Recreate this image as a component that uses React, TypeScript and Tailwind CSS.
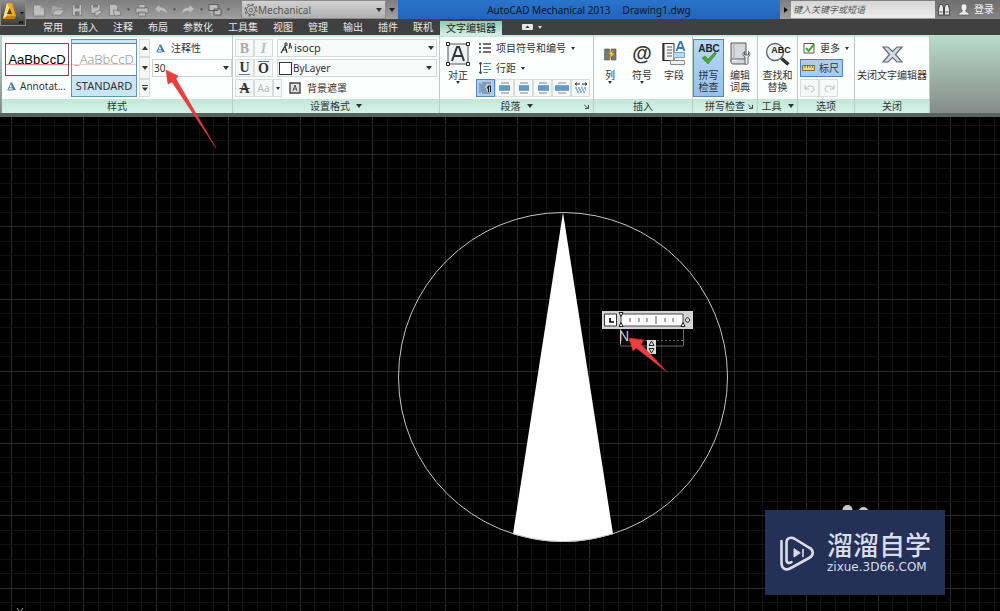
import type { ReactNode } from "react";
import clsx from "clsx";

const MENU = [
  "常用",
  "插入",
  "注释",
  "布局",
  "参数化",
  "工具集",
  "视图",
  "管理",
  "输出",
  "插件",
  "联机",
];

const GRID_STEP = 14.45;

function Caret({ className }: { className?: string }) {
  return (
    <svg viewBox="0 0 6 4" className={clsx("h-1 w-1.5 shrink-0", className)}>
      <path d="M0 0h6L3 4z" fill="currentColor" />
    </svg>
  );
}

function SmallCaret() {
  return (
    <svg viewBox="0 0 4 3" className="h-[3px] w-1 shrink-0">
      <path d="M0 0h4L2 3z" fill="#333" />
    </svg>
  );
}

/* ---------- title bar ---------- */

function QuickButton({
  label,
  children,
}: {
  label: string;
  children: ReactNode;
}) {
  return (
    <button type="button" aria-label={label} className="shrink-0">
      <svg viewBox="0 0 14 14" className="size-3.5" fill="#bdbdbd">
        {children}
      </svg>
    </button>
  );
}

function Dot() {
  return (
    <svg viewBox="0 0 3 3" className="size-[3px] shrink-0">
      <path d="M0 .5h3L1.500 3z" fill="#4c4c4c" />
    </svg>
  );
}

function QuickAccess() {
  return (
    <div className="flex w-[241px] shrink-0 items-center gap-[5px] pl-8">
      <QuickButton label="新建">
        <path d="M1.500 2h7l4 3.500V13h-11z" stroke="#6c6c6c" strokeWidth=".6" />
        <path d="M8.500 2v3.500h4" fill="#959595" />
      </QuickButton>
      <QuickButton label="打开">
        <path d="M1 3h4l1 1.500h5V7H4L1 12z" fill="#a5a5a5" />
        <path d="M4 7h9.500L10 12H1z" stroke="#666" strokeWidth=".5" />
      </QuickButton>
      <QuickButton label="保存">
        <path d="M2.500 1.500h9v11h-9z" stroke="#6c6c6c" strokeWidth=".6" />
        <path d="M4.500 2h5v3.500h-5zM5 8.500h4.500V12H5z" fill="#777" />
      </QuickButton>
      <QuickButton label="另存为">
        <path d="M2 1.500h9v9H2z" stroke="#6c6c6c" strokeWidth=".6" />
        <path d="M4 2h5v2.500H4z" fill="#777" />
        <path d="M6 9l5-2 2 2-5 4H6z" stroke="#666" strokeWidth=".6" />
      </QuickButton>
      <QuickButton label="图纸">
        <path d="M1.500 1.500h6l2 2v9h-8z" stroke="#6c6c6c" strokeWidth=".6" />
        <path d="M5 7l7 1 1 4-6 1z" stroke="#666" strokeWidth=".6" />
      </QuickButton>
      <Dot />
      <QuickButton label="打印">
        <path d="M4 1.500h6V5H4zM1 5h12v5H1zM3.500 9h7v4h-7z" stroke="#666" strokeWidth=".6" />
      </QuickButton>
      <QuickButton label="放弃">
        <path d="M5.500 2v2.500C10 4.500 13 6.500 12.500 11 11 8 9 7.500 5.500 7.500V10L1 6z" />
      </QuickButton>
      <Dot />
      <QuickButton label="重做">
        <path d="M8.500 2v2.500C4 4.500 1 6.500 1.500 11 3 8 5 7.500 8.500 7.500V10L13 6z" />
      </QuickButton>
      <Dot />
      <QuickButton label="切换窗口">
        <path d="M1 1.500h9v6H1zM6 6h7v6H6z" stroke="#5c5c5c" />
        <path d="M2 9h2v3h1" fill="none" stroke="#bdbdbd" />
      </QuickButton>
      <Dot />
    </div>
  );
}

function GearIcon() {
  return (
    <svg
      viewBox="0 0 14 14"
      className="pointer-events-none absolute left-0.5 top-0.5 size-3.5"
      fill="none"
      stroke="#666"
    >
      <circle cx="7" cy="7" r="4.500" />
      <circle cx="7" cy="7" r="6" strokeWidth="1.200" strokeDasharray="2.400 2.300" />
      <circle cx="7" cy="7" r="1.800" />
    </svg>
  );
}

function TitleBar() {
  return (
    <header className="flex h-[19px] items-stretch bg-linear-to-b from-[#7e7e7e] to-[#a0a0a0]">
      <QuickAccess />
      <label className="relative flex w-[145px] shrink-0 items-center border border-[#8a8a8a] bg-linear-to-b from-[#d2d2d2] to-[#b0b0b0] text-[#555]">
        <GearIcon />
        <select
          aria-label="工作空间"
          className="w-full appearance-none pl-4 text-[10px] leading-4 outline-none"
        >
          <option>Mechanical</option>
        </select>
        <Caret className="pointer-events-none absolute right-[3px] text-[#333]" />
      </label>
      <button type="button" aria-label="自定义" className="flex w-3 shrink-0 items-center justify-center">
        <Caret className="text-[#222]" />
      </button>
      <h1 className="flex flex-1 items-center justify-center gap-3 bg-linear-to-b from-[#2a74cc] to-[#2365ba] text-[10px] leading-4 text-[#0c1526]">
        <span>AutoCAD Mechanical 2013</span>
        <span>Drawing1.dwg</span>
      </h1>
      <button type="button" aria-label="展开搜索" className="flex w-[11px] shrink-0 items-center justify-center">
        <svg viewBox="0 0 4 6" className="h-1.5 w-1">
          <path d="M0 0l4 3-4 3z" fill="#111" />
        </svg>
      </button>
      <input
        type="search"
        aria-label="搜索"
        placeholder="键入关键字或短语"
        className="my-px w-[144px] shrink-0 bg-linear-to-b from-[#d6d6d6] to-[#ececec] px-0.5 text-[9px] italic outline-none placeholder:text-[#555]"
      />
      <div className="flex w-[65px] shrink-0 items-center gap-2 bg-linear-to-b from-[#6e6e6e] to-[#858585] pl-[3px] text-[10px] text-[#f2f2f2]">
        <button type="button" aria-label="查找">
          <svg viewBox="0 0 12 13" className="h-[13px] w-3" fill="#e6e6e6" stroke="#333" strokeWidth=".8">
            <path d="M2 1.500h2.500L5.500 5v7h-5V6zM10 1.500H7.500L6.500 5v7h5V6z" />
            <path d="M5.500 5h1v2.500h-1zM1.500 9h3M7.500 9h3" />
          </svg>
        </button>
        <button type="button" className="flex items-center gap-1">
          <svg viewBox="0 0 12 13" className="h-[13px] w-3" fill="#eee" stroke="#444" strokeWidth=".6">
            <path d="M6 .8c2 0 3 1.500 3 3.400S7.800 7.500 7.500 8c.2 1 4 1.500 4 4H.5c0-2.500 3.800-3 4-4C4.200 7.500 3 6 3 4.200S4 .8 6 .8z" />
          </svg>
          登录
        </button>
      </div>
    </header>
  );
}

function AppButton() {
  return (
    <button
      type="button"
      aria-label="应用程序菜单"
      className="absolute left-0 top-0 z-10 h-[26px] w-[26px] border border-[#8a8a8a] bg-linear-to-b from-[#8a8a8a] to-[#3c3c3c]"
    >
      <svg viewBox="0 0 24 24" className="size-6">
        <path d="M6 2h5l4 13-2 3H2z" fill="#eda81c" />
        <path d="M6 2L2 18l4-3 3-7z" fill="#fbe08a" />
        <path d="M8.500 7l2.500 6H6z" fill="#5a3c08" />
        <path d="M2 18h11l2-3H6z" fill="#c97a10" />
        <path d="M19 11h4l-2 2.500z" fill="#111" />
        <path d="M18.500 23v-3l1.500 2 1.500-2v3" fill="none" stroke="#111" strokeWidth="1" />
      </svg>
    </button>
  );
}

function MenuBar() {
  return (
    <nav className="flex h-4 items-stretch bg-[#404040] text-[10px] leading-4 text-[#e8e8e8]">
      <ul className="flex w-[440px] shrink-0 gap-[15px] pl-[43px]">
        {MENU.map((item) => (
          <li key={item} className="shrink-0">
            <a href="#">{item}</a>
          </li>
        ))}
      </ul>
      <a
        href="#"
        aria-current="page"
        className="mt-0.5 w-[62px] shrink-0 bg-linear-to-b from-[#8fc8b0] to-[#d4f0e4] text-center leading-[14px] text-[#222]"
      >
        文字编辑器
      </a>
      <button type="button" aria-label="最小化功能区" className="ml-5 flex items-center gap-[5px]">
        <svg viewBox="0 0 11 6" className="h-1.5 w-[11px]">
          <rect width="11" height="6" rx="1" fill="#e6e6e6" />
          <path d="M3.500 4l2-2.500 2 2.500z" fill="#333" />
        </svg>
        <svg viewBox="0 0 4 3" className="h-[3px] w-1">
          <path d="M0 0h4L2 3z" fill="#ddd" />
        </svg>
      </button>
    </nav>
  );
}

/* ---------- ribbon ---------- */

function Panel({
  title,
  width,
  menu,
  launcher,
  children,
}: {
  title: string;
  width: string;
  menu?: boolean;
  launcher?: boolean;
  children: ReactNode;
}) {
  return (
    <section className={clsx("flex shrink-0 flex-col border-r border-[#b9cdc4]", width)}>
      <div className="flex h-16 border-t-2 border-[#cdeade] bg-[#fdfefe] pb-0.5 pt-0.5">{children}</div>
      <footer className="relative flex h-3.5 items-center justify-center gap-1.5 bg-linear-to-b from-[#c4e6d9] to-[#d3f5e9] text-[10px] leading-[14px]">
        <h2>{title}</h2>
        {menu && <Caret />}
        {launcher && (
          <svg viewBox="0 0 5 5" className="absolute right-1 size-[5px]" stroke="#444" fill="none">
            <path d="M0 .5l4 4M4.500 1v3.500H1" />
          </svg>
        )}
      </footer>
    </section>
  );
}

function Tool({
  label,
  children,
  className,
  active,
}: {
  label: string;
  children: ReactNode;
  className?: string;
  active?: boolean;
}) {
  return (
    <button
      type="button"
      aria-label={label}
      className={clsx(
        "flex h-[18px] shrink-0 items-center justify-center border",
        active ? "border-[#5787bb] bg-[#a9cbee]" : "border-[#d9dcdd] bg-[#f7f8f8]",
        className,
      )}
    >
      {children}
    </button>
  );
}

function BigButton({
  lines,
  menu,
  active,
  width,
  children,
}: {
  lines: string[];
  menu?: boolean;
  active?: boolean;
  width: string;
  children: ReactNode;
}) {
  return (
    <button
      type="button"
      className={clsx(
        "flex h-[58px] shrink-0 flex-col items-center border text-[10px] leading-3",
        width,
        active ? "border-[#5787bb] bg-linear-to-b from-[#b9d8f5] to-[#94c1ec]" : "border-transparent",
      )}
    >
      <svg viewBox="0 0 28 28" className="mb-px h-7 w-7 shrink-0">
        {children}
      </svg>
      {lines.map((line) => (
        <span key={line} className="whitespace-nowrap">
          {line}
        </span>
      ))}
      {menu && <SmallCaret />}
    </button>
  );
}

function AnnoIcon() {
  return (
    <svg viewBox="0 0 9 9" className="size-[9px] shrink-0">
      <path d="M3.500.500h1.500L8.800 8H6.500z" fill="#3f6f98" />
      <path d="M.8 8L4 1l2.500 7z" fill="#fff" stroke="#4f80a8" />
      <path d="M2 5.800h4" stroke="#4f80a8" />
    </svg>
  );
}

function StylePanel() {
  return (
    <Panel title="样式" width="w-[231px]">
      <button type="button" className="ml-[3px] mt-1 flex h-[54px] w-16 shrink-0 flex-col">
        <span className="relative flex h-[33px] w-full items-center justify-center border border-[#7a4a50] font-[Liberation_Sans] text-[13px] text-black">
          AaBbCcD
          <span className="absolute inset-x-0 bottom-2.5 border-b border-[#e88]" />
        </span>
        <span className="flex h-5 items-center gap-1 pl-0.5 text-[10px]">
          <AnnoIcon />
          Annotat...
        </span>
      </button>
      <button
        type="button"
        className="ml-0.5 flex h-[58px] w-[66px] shrink-0 flex-col border border-[#5f95b5] bg-[#c9e6f7] pt-[3px]"
      >
        <span className="relative flex h-[33px] w-full items-center justify-center border-y border-[#6b7f8c] bg-white font-[Open_Sans] text-[13px] font-light text-[#888]">
          _AaBbCcD
          <span className="absolute inset-x-0 bottom-2.5 border-b border-[#f6caca]" />
        </span>
        <span className="w-full text-center text-[11px] leading-5">STANDARD</span>
      </button>
      <div className="ml-0.5 flex w-[11px] shrink-0 flex-col">
        <Tool label="上一行" className="w-[11px]">
          <Caret className="rotate-180" />
        </Tool>
        <Tool label="下一行" className="w-[11px] flex-1">
          <Caret />
        </Tool>
        <Tool label="更多样式" className="w-[11px]">
          <svg viewBox="0 0 6 6" className="size-1.5">
            <path d="M0 0h6v1H0zM0 2.500h6L3 6z" fill="#333" />
          </svg>
        </Tool>
      </div>
      <div className="ml-0.5 flex flex-1 flex-col gap-0.5">
        <button type="button" className="flex h-[18px] items-center gap-1.5 pl-1 text-[10px]">
          <AnnoIcon />
          注释性
        </button>
        <label className="relative flex h-[18px] items-center border border-[#cfd4d6] bg-white">
          <input
            aria-label="文字高度"
            defaultValue="30"
            className="w-full pl-px text-[10px] outline-none"
          />
          <Caret className="pointer-events-none absolute right-0.5" />
        </label>
      </div>
    </Panel>
  );
}

function FormatPanel() {
  return (
    <Panel title="设置格式" width="w-[207px]" menu>
      <div className="flex w-full flex-col gap-0.5 pl-0.5 pr-0.5">
        <div className="flex">
          <Tool label="粗体" className="w-[19px] font-[Liberation_Serif] text-[14px] font-bold text-[#aaa]">
            B
          </Tool>
          <Tool label="斜体" className="w-[19px] font-[Liberation_Serif] text-[14px] font-bold italic text-[#bbb]">
            I
          </Tool>
          <label className="relative ml-1 flex h-[18px] flex-1 items-center border border-[#d3d7d9] bg-[#f8f9f9]">
            <svg viewBox="0 0 12 12" className="pointer-events-none absolute left-0.5 size-3" stroke="#333" fill="none">
              <path d="M1 11l4-7 2 7M2 8h5" strokeWidth="1.200" />
              <path d="M5 4V1h2v3M5 3h2M9 7l1-6 2 6M9 5h2" strokeWidth=".9" />
            </svg>
            <select aria-label="字体" className="w-full appearance-none pl-4 text-[11px] leading-4 outline-none">
              <option>isocp</option>
            </select>
            <Caret className="pointer-events-none absolute right-0.5" />
          </label>
        </div>
        <div className="flex">
          <Tool label="下划线" className="w-[19px] font-[Liberation_Serif] text-[14px] font-bold">
            <span className="border-b border-[#4f80a8] leading-[13px]">U</span>
          </Tool>
          <Tool label="上划线" className="w-[19px] font-[Liberation_Serif] text-[14px] font-bold">
            <span className="border-t border-[#4f80a8] leading-[13px]">O</span>
          </Tool>
          <label className="relative ml-1 flex h-[18px] flex-1 items-center border border-[#d3d7d9] bg-[#f8f9f9]">
            <span className="pointer-events-none absolute left-px size-[13px] border border-[#333] bg-white" />
            <select aria-label="颜色" className="w-full appearance-none pl-[15px] text-[10px] leading-4 outline-none">
              <option>ByLayer</option>
            </select>
            <Caret className="pointer-events-none absolute right-1" />
          </label>
        </div>
        <div className="flex text-[10px]">
          <Tool label="删除线" className="w-[19px] font-[Liberation_Serif] text-[14px] font-bold">
            <span className="line-through">A</span>
          </Tool>
          <Tool label="更改大小写" className="w-[19px] text-[10px] text-[#bbb]">
            Aa
          </Tool>
          <Tool label="大小写选项" className="w-[9px]">
            <SmallCaret />
          </Tool>
          <button type="button" className="ml-[7px] flex items-center gap-1.5">
            <svg viewBox="0 0 12 12" className="size-3" fill="#e4e4e4" stroke="#444">
              <path d="M1 1h10v10H1z" strokeWidth="1.400" />
              <path d="M4 9l2-6 2 6M4.500 7h3" fill="none" strokeWidth=".9" />
            </svg>
            背景遮罩
          </button>
        </div>
      </div>
    </Panel>
  );
}

function AlignIcon({ x, w }: { x: number; w: number }) {
  return (
    <svg viewBox="0 0 14 12" className="h-3 w-3.5">
      <path d="M3 1h8M3 11h8" stroke="#888" />
      <path d={`M${x} 3.500h${w}v5h-${w}z`} fill="#8dbbe0" />
      <path d={`M${x} 4h${w}M${x} 6h${w}M${x} 8h${w}`} stroke="#3a78b0" />
    </svg>
  );
}

function ParagraphPanel() {
  return (
    <Panel title="段落" width="w-[154px]" menu launcher>
      <BigButton lines={["对正"]} width="w-9" menu>
        <path d="M4 4h20v20H4z" fill="#eef0f2" stroke="#555" />
        <path d="M8 21L13 7h2l5 14M10 16h8" fill="none" stroke="#333" strokeWidth="2" />
        <path d="M2.500 2.500h3v3h-3zM22.500 2.500h3v3h-3zM2.500 22.500h3v3h-3zM22.500 22.500h3v3h-3z" fill="#fff" stroke="#222" />
      </BigButton>
      <div className="flex flex-col gap-0.5 text-[10px]">
        <button type="button" className="flex h-[18px] items-center gap-[5px] pl-[3px]">
          <svg viewBox="0 0 12 11" className="h-[11px] w-3">
            <path d="M0 0h2v2H0zM0 4h2v2H0zM0 8h2v2H0z" fill="#2d6da8" />
            <path d="M4 1h8M4 5h8M4 9h8" stroke="#444" strokeWidth="1.300" />
          </svg>
          项目符号和编号
          <SmallCaret />
        </button>
        <button type="button" className="flex h-[18px] items-center gap-[5px] pl-[3px]">
          <svg viewBox="0 0 12 12" className="size-3">
            <path d="M1.500 1v10M0 2.500L1.500 0 3 2.500M0 9.500L1.500 12 3 9.500" stroke="#333" fill="none" strokeWidth=".9" />
            <path d="M4.500 1.500H12M4.500 4.500H10M4.500 7.500H12M4.500 10.500H9" stroke="#4583b8" />
          </svg>
          行距
          <SmallCaret />
        </button>
        <div className="flex">
          <Tool label="默认" className="w-[19px]" active>
            <svg viewBox="0 0 14 12" className="h-3 w-3.5" fill="none">
              <path d="M3 1h9M2 3h5M2 5h4M2 7h5M2 9h6M3 11h8" stroke="#667" />
              <path d="M1 1v10" stroke="#4583b8" />
              <path d="M9.500 4v6M11.500 4v6M12 4H9" stroke="#222" />
              <path d="M9.500 4a1.500 1.500 0 000 3z" fill="#222" />
            </svg>
          </Tool>
          <Tool label="左对齐" className="w-[19px]">
            <AlignIcon x={1} w={11} />
          </Tool>
          <Tool label="居中" className="w-[19px]">
            <AlignIcon x={2} w={10} />
          </Tool>
          <Tool label="右对齐" className="w-[19px]">
            <AlignIcon x={2} w={11} />
          </Tool>
          <Tool label="两端对齐" className="w-[19px]">
            <AlignIcon x={0} w={14} />
          </Tool>
          <Tool label="分散对齐" className="w-[19px]">
            <svg viewBox="0 0 14 12" className="h-3 w-3.5" fill="none">
              <path d="M1 2h12" stroke="#333" strokeDasharray="5 2" />
              <path d="M3 .5L1 2l2 1.500M11 .5L13 2l-2 1.500" stroke="#333" />
              <path d="M1 6h12M2 8h10M3 10h8" stroke="#3a78b0" strokeDasharray="2 1" />
            </svg>
          </Tool>
        </div>
      </div>
    </Panel>
  );
}

function InsertPanel() {
  return (
    <Panel title="插入" width="w-[99px]">
      <BigButton lines={["列"]} width="w-8" menu>
        <path d="M8.500 9h5v11h-5zM15 9h5v11h-5z" fill="#777" stroke="#555" strokeWidth=".6" />
        <path d="M19 9l-7 5 3 .500-3 5 7-6-3-.500z" fill="#ffd83a" stroke="#8a6a00" strokeWidth=".5" />
      </BigButton>
      <BigButton lines={["符号"]} width="w-8" menu>
        <text x="14" y="20" textAnchor="middle" fontFamily="Liberation Sans, sans-serif" fontSize="20" fontWeight="700" fill="#333">
          @
        </text>
      </BigButton>
      <BigButton lines={["字段"]} width="w-8">
        <path d="M3 3.500h11v17H3z" fill="#f4f4f4" stroke="#333" />
        <path d="M3.500 3v18" stroke="#333" strokeWidth="2" />
        <path d="M7 7h5M7 10h5M7 13h5M7 16h5" stroke="#555" />
        <path d="M13.500 12.500h11v5h-11z" fill="#b9d8f0" stroke="#7aa7cc" />
        <path d="M10.500 20.500h14v4h-14z" fill="#eee" stroke="#888" />
        <path d="M16.500 11l3.500-9h1l3.500 9M18 8h5" fill="none" stroke="#2f74b5" strokeWidth="1.800" />
      </BigButton>
    </Panel>
  );
}

function SpellPanel() {
  return (
    <Panel title="拼写检查" width="w-[65px]" launcher>
      <BigButton lines={["拼写", "检查"]} width="w-[31px]" active>
        <text x="14" y="12" textAnchor="middle" fontFamily="Liberation Sans, sans-serif" fontSize="10" fontWeight="700" fill="#223">
          ABC
        </text>
        <path d="M7 18l3-2 3 3 7-7 1.500 1.500L13 24z" fill="#4aa832" stroke="#2f7a1e" strokeWidth=".5" />
      </BigButton>
      <BigButton lines={["编辑", "词典"]} width="w-8">
        <path d="M5 3h15v21H7c-1.500 0-2-1-2-2z" fill="#d5d8dc" stroke="#555" />
        <path d="M5 21c0-1.500 1-2 2-2h13" fill="#fff" stroke="#555" />
        <path d="M8 3v16" stroke="#aaa" />
        <path d="M18.500 11.500c-2 1-2 4.500.500 5.500v6c0 2 3 2 3 0v-6c2.500-1 2.500-4.500.500-5.500v3.500h-4z" fill="#e9ecef" stroke="#444" strokeWidth=".8" />
      </BigButton>
    </Panel>
  );
}

function ToolsPanel() {
  return (
    <Panel title="工具" width="w-10" menu>
      <BigButton lines={["查找和", "替换"]} width="w-[39px]">
        <circle cx="11" cy="12" r="8.500" fill="#f3f6f8" stroke="#667" strokeWidth="1.400" />
        <path d="M17.500 18.500l7 6" stroke="#333" strokeWidth="3.500" />
        <text x="17" y="13" textAnchor="middle" fontFamily="Liberation Sans, sans-serif" fontSize="9" fontWeight="700" fill="#222">
          ABC
        </text>
      </BigButton>
    </Panel>
  );
}

function OptionsPanel() {
  return (
    <Panel title="选项" width="w-[57px]">
      <div className="flex flex-col gap-0.5 pl-0.5 text-[10px]">
        <button type="button" className="flex h-[18px] items-center gap-[5px] pl-[3px]">
          <svg viewBox="0 0 12 12" className="size-3" fill="none">
            <path d="M1 1.500h10v9.500H1z" fill="#fff" stroke="#555" />
            <path d="M3 6l2.500 3L11 2.500" stroke="#4aa832" strokeWidth="2" />
          </svg>
          更多
          <SmallCaret />
        </button>
        <button
          type="button"
          aria-pressed="true"
          className="flex h-[18px] w-[43px] items-center gap-1 border border-[#4f83c4] bg-[#a9ccf2] pl-px"
        >
          <svg viewBox="0 0 13 6" className="h-1.5 w-[13px]">
            <path d="M.5.500h12v5H.5z" fill="#f0d78a" stroke="#8a6a2a" />
            <path d="M3 1v2M5.500 1v2M8 1v2M10.500 1v2" stroke="#6a4f1a" strokeWidth=".7" />
          </svg>
          标尺
        </button>
        <div className="flex">
          <Tool label="放弃" className="w-[19px]">
            <svg viewBox="0 0 12 10" className="h-2.5 w-3" fill="none" stroke="#bbb">
              <path d="M1 2v4h4M1 6c3-4 9-4 9 0 0 2-2 3-3 3" />
            </svg>
          </Tool>
          <Tool label="重做" className="w-[19px]">
            <svg viewBox="0 0 12 10" className="h-2.5 w-3" fill="none" stroke="#bbb">
              <path d="M11 2v4H7M11 6C8 2 2 2 2 6c0 2 2 3 3 3" />
            </svg>
          </Tool>
        </div>
      </div>
    </Panel>
  );
}

function Ribbon() {
  return (
    <div className="flex border-b-4 border-[#56635e] bg-linear-to-b from-[#b9dccd] to-[#858c89] pl-0.5 text-[#333]">
      <StylePanel />
      <FormatPanel />
      <ParagraphPanel />
      <InsertPanel />
      <SpellPanel />
      <ToolsPanel />
      <OptionsPanel />
      <Panel title="关闭" width="w-[75px]">
        <BigButton lines={["关闭文字编辑器"]} width="w-[74px]">
          <path d="M5 7h5l4.500 4.500L19 7h5l-6.500 7.500L24 22h-5l-4.500-4.500L10 22H5l6.500-7.500z" fill="#d5dae4" stroke="#666c78" strokeWidth="1.200" />
        </BigButton>
      </Panel>
    </div>
  );
}

/* ---------- drawing area ---------- */

function Grid() {
  const lines = Array.from({ length: 180 }, (_, i) => i);
  return (
    <g shapeRendering="crispEdges">
      {lines.map((i) => (
        <line
          key={`v${i}`}
          x1={Math.round(11 + (i - 1) * GRID_STEP) + 0.5}
          x2={Math.round(11 + (i - 1) * GRID_STEP) + 0.5}
          y1="0"
          y2="100%"
          stroke={i % 5 === 1 ? "#29292b" : "#111113"}
        />
      ))}
      {lines.map((i) => (
        <line
          key={`h${i}`}
          y1={Math.round(37 + (i - 2) * GRID_STEP) + 0.5}
          y2={Math.round(37 + (i - 2) * GRID_STEP) + 0.5}
          x1="0"
          x2="100%"
          stroke={i % 5 === 2 ? "#29292b" : "#111113"}
        />
      ))}
    </g>
  );
}

function TextRuler() {
  return (
    <div className="absolute left-[602px] top-[194px]">
      <svg viewBox="0 0 91 36" className="h-9 w-[91px]" fill="none">
        <path d="M0 0h91v18H0z" fill="#d4d4d4" />
        <path d="M2.500 3h12v12h-12z" fill="#fff" stroke="#333" />
        <path d="M8 7v4h4" stroke="#000" strokeWidth="1.600" />
        <path d="M19 3h62v12H19z" fill="#fff" stroke="#444" />
        <path d="M28 7v4M37 7v4M45 7v4M54 5v8M63 7v4M71 7v4" stroke="#555" />
        <path d="M17 1.500h4l-2 4zM17 15.500h4l-2-4zM79 15.500h4l-2-4z" fill="#fff" stroke="#222" />
        <path d="M85.500 6l2.500 3-2.500 3L83 9z" stroke="#333" />
        <path d="M18.500 18v17h63V18" stroke="#666" />
        <path d="M27 29.500h54" stroke="#666" strokeDasharray="2 2" />
        <path d="M18.500 19v14" stroke="#ccc" />
      </svg>
      <svg viewBox="0 0 9 14" className="absolute left-[45px] top-[29px] h-3.5 w-[9px]" fill="none" stroke="#222">
        <path d="M0 0h9v14H0z" fill="#ddd" stroke="none" />
        <path d="M2 5.500h5L4.500 1zM2 8.500h5L4.500 13z" />
      </svg>
      <span className="absolute left-[17px] top-[18px] font-[Liberation_Sans] text-[14px] leading-[14px] text-[#ccc]">
        N
      </span>
    </div>
  );
}

function Brand() {
  return (
    <div className="absolute bottom-4 right-[55px]">
      <svg viewBox="0 0 40 12" className="absolute -top-[5px] left-[74px] h-3 w-10" fill="#c9c9c4">
        <circle cx="8.500" cy="5" r="5" />
        <circle cx="24.500" cy="7" r="5" />
      </svg>
      <div className="relative flex h-[85px] w-[180px] items-center gap-3 bg-[#243056] pl-[14px] text-[#d9dde8]">
        <svg
          viewBox="0 0 36 36"
          className="h-9 w-9 shrink-0"
          fill="none"
          stroke="#d9dde8"
          strokeWidth="2.600"
          strokeLinecap="round"
        >
          <path d="M2.500 6v22c0 5 4 8 8.500 5.500l19-10.500c5-2.500 5-8 0-10.500L16 4C11.500 1.500 7.500 3 7.500 7.500V25c0 3.500 3 3.500 5 2" />
          <path d="M15 14v8l6-4z" fill="#d9dde8" strokeWidth="1" />
          <path d="M24 14.500v7" strokeWidth="1.600" />
        </svg>
        <div className="flex flex-col whitespace-nowrap">
          <span className="text-[26px] font-medium leading-7">溜溜自学</span>
          <span className="font-[DejaVu_Sans] text-[12px] leading-4">zixue.3D66.COM</span>
        </div>
      </div>
    </div>
  );
}

function Canvas() {
  return (
    <main className="relative flex-1 overflow-hidden bg-black">
      <svg className="absolute inset-0 h-full w-full">
        <Grid />
        <path d="M563 95.500L613 417A164.500 164.500 0 01513 417z" fill="#fff" />
        <circle cx="563" cy="260" r="164.500" fill="none" stroke="#c4c4c4" />
        <path d="M17 491l3 4 3-4" fill="none" stroke="#aaa" />
      </svg>
      <TextRuler />
      <Brand />
    </main>
  );
}

function Arrows() {
  return (
    <svg
      className="pointer-events-none absolute inset-0 z-20 h-full w-full"
      fill="#e93f3f"
      stroke="#c83232"
      strokeWidth=".5"
    >
      <path d="M166 70l12 6-2 3L216 148 172 82l-4 2z" />
      <path d="M629 338l15 2-3 4L667 372 636 348l-3 3z" />
    </svg>
  );
}

export default function App() {
  return (
    <div className="relative flex min-h-screen flex-col overflow-hidden bg-black font-['Noto_Sans','Noto_Sans_CJK_SC',sans-serif]">
      <AppButton />
      <TitleBar />
      <MenuBar />
      <Ribbon />
      <Canvas />
      <Arrows />
    </div>
  );
}
